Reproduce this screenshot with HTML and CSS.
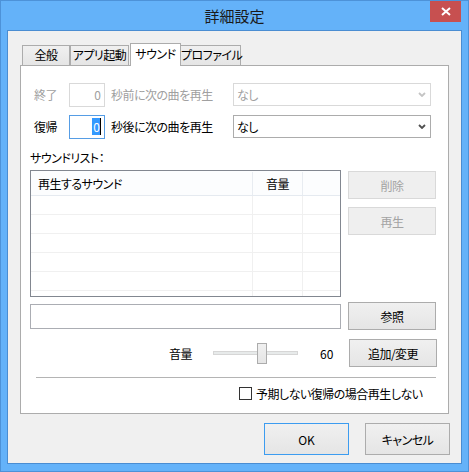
FILE: index.html
```html
<!DOCTYPE html>
<html lang="ja">
<head>
<meta charset="utf-8">
<title>詳細設定</title>
<link rel="stylesheet" href="styles.css">
</head>
<body>
<div class="window">
  <div class="titlebar">
    <div class="title">詳細設定</div>
    <button class="close" aria-label="閉じる">
      <svg width="10" height="9" viewBox="0 0 10 9"><path d="M1 1 L9 8 M9 1 L1 8" stroke="#fff" stroke-width="2" fill="none"/></svg>
    </button>
  </div>
  <div class="client">
    <div class="tabs">
      <div class="tab t1">全般</div>
      <div class="tab t2">アプリ起動</div>
      <div class="tab t3 active">サウンド</div>
      <div class="tab t4">プロファイル</div>
    </div>
    <div class="panel">
      <div class="setrow disabled">
        <span class="lbl">終了</span>
        <div class="num">0</div>
        <span class="txt">秒前に次の曲を再生</span>
        <div class="select">なし<svg class="chev" width="8" height="5" viewBox="0 0 8 5"><path d="M1 1 L4 4 L7 1" stroke="#c4c4c4" stroke-width="1.8" fill="none"/></svg></div>
      </div>
      <div class="setrow second">
        <span class="lbl">復帰</span>
        <div class="num focus"><span class="sel">0</span></div>
        <span class="txt">秒後に次の曲を再生</span>
        <div class="select">なし<svg class="chev" width="8" height="5" viewBox="0 0 8 5"><path d="M1 1 L4 4 L7 1" stroke="#505050" stroke-width="1.8" fill="none"/></svg></div>
      </div>
      <div class="listlabel">サウンドリスト：</div>
      <div class="listarea">
        <div class="list">
          <div class="lrow head"><div class="c1">再生するサウンド</div><div class="c2">音量</div><div class="c3"></div></div>
          <div class="lrow"><div class="c1"></div><div class="c2"></div><div class="c3"></div></div>
          <div class="lrow"><div class="c1"></div><div class="c2"></div><div class="c3"></div></div>
          <div class="lrow"><div class="c1"></div><div class="c2"></div><div class="c3"></div></div>
          <div class="lrow"><div class="c1"></div><div class="c2"></div><div class="c3"></div></div>
          <div class="lrow"><div class="c1"></div><div class="c2"></div><div class="c3"></div></div>
          <div class="lrow"><div class="c1"></div><div class="c2"></div><div class="c3"></div></div>
        </div>
        <div class="sidebtns">
          <button class="btn" disabled>削除</button>
          <button class="btn" disabled>再生</button>
        </div>
      </div>
      <div class="pathrow">
        <div class="path"></div>
        <button class="btn">参照</button>
      </div>
      <div class="volrow">
        <span class="vlbl">音量</span>
        <div class="slider"><div class="track"></div><div class="thumb"></div></div>
        <span class="vval">60</span>
        <button class="btn">追加/変更</button>
      </div>
      <div class="sep"></div>
      <div class="checkrow">
        <span class="box"></span>
        <span class="ctext">予期しない復帰の場合再生しない</span>
      </div>
    </div>
    <div class="footer">
      <button class="btn big default">OK</button>
      <button class="btn big">キャンセル</button>
    </div>
  </div>
</div>
</body>
</html>
```
FILE: styles.css
```css
* { box-sizing: border-box; }
html, body { margin: 0; padding: 0; }
body {
  width: 469px;
  height: 472px;
  overflow: hidden;
  font-family: "Noto Sans CJK JP", "Noto Sans", sans-serif;
  font-size: 12px;
  color: #000;
  font-feature-settings: "palt";
  letter-spacing: -0.5px;
}
.window {
  width: 469px;
  height: 472px;
  background: #64b2f9;
  border: 1px solid #4d92d8;
  display: flex;
  flex-direction: column;
  position: relative;
}
.titlebar {
  height: 29px;
  display: flex;
  align-items: center;
  justify-content: center;
  flex: none;
}
.title {
  font-size: 15px;
  line-height: 20px;
  color: #1a1a1a;
  margin-top: 1px;
  letter-spacing: 0;
}
.close {
  position: absolute;
  top: 0;
  right: 7px;
  width: 31px;
  height: 21px;
  background: #c75050;
  border: 0;
  padding: 0;
  display: flex;
  align-items: center;
  justify-content: center;
}
.client {
  margin: 0 6px;
  height: 434px;
  border: 1px solid #4a8dd2;
  background: #f0f0f0;
  padding: 12px 12px 8px 12px;
  display: flex;
  flex-direction: column;
}
.tabs {
  height: 22px;
  display: flex;
  align-items: flex-end;
  padding-left: 2px;
  flex: none;
}
.tab {
  height: 20px;
  border: 1px solid #acacac;
  border-bottom: 0;
  background: linear-gradient(#f0f0f0, #e5e5e5);
  text-align: center;
  line-height: 18px;
  white-space: nowrap;
}
.t1 { width: 48px; }
.t2 { width: 59px; }
.t3 { width: 51px; margin-left: 1px; }
.t4 { width: 61px; margin-left: -1px; }
.tab.active {
  height: 23px;
  margin-bottom: -1px;
  background: #fff;
  position: relative;
  z-index: 1;
  line-height: 19px;
}
.panel {
  height: 349px;
  border: 1px solid #acacac;
  background: #fff;
  padding: 17px 11px 0 9px;
  display: flex;
  flex-direction: column;
  flex: none;
}
.setrow {
  display: grid;
  grid-template-columns: 39px 36px 1fr 198px;
  align-items: start;
  height: 24px;
  margin-right: 6px;
}
.setrow.second { margin-top: 8px; }
.lbl { padding-left: 4px; line-height: 24px; }
.txt { padding-left: 6px; line-height: 24px; }
.num {
  height: 24px;
  border: 1px solid #abadb3;
  text-align: right;
  padding-right: 3px;
  line-height: 22px;
  background: #fff;
  letter-spacing: 0;
}
.num.focus { border-color: #569de5; }
.sel {
  background: #3399ff;
  color: #fff;
  border-right: 1px solid #000;
  padding: 0 0 0 1px;
}
.select {
  height: 23px;
  border: 1px solid #acacac;
  display: flex;
  align-items: center;
  padding: 0 4px 0 3px;
  background: #fff;
}
.chev { margin-left: auto; }
.disabled { color: #a0a0a0; }
.disabled .num, .disabled .select { border-color: #d9d9d9; }
.listlabel {
  margin-top: 11px;
  line-height: 16px;
  height: 16px;
}
.listarea {
  margin-top: 4px;
  display: flex;
  align-items: flex-start;
}
.list {
  width: 311px;
  height: 127px;
  border: 1px solid #828790;
  background: #fff;
  overflow: hidden;
  flex: none;
}
.lrow {
  display: flex;
  height: 19px;
  border-bottom: 1px solid #f0f0f0;
}
.lrow.head {
  height: 25px;
  border-bottom: 1px solid #e5eaf0;
  background: #fcfdfe;
  line-height: 24px;
  padding-top: 1px;
}
.c1 { width: 222px; border-right: 1px solid #f0f0f0; padding-left: 7px; }
.c2 { width: 50px; border-right: 1px solid #f0f0f0; text-align: center; }
.c3 { flex: 1; }
.head .c1, .head .c2 { border-right-color: #e8ecf1; }
.sidebtns {
  margin-left: 7px;
  margin-top: 1px;
  display: flex;
  flex-direction: column;
  gap: 8px;
}
.btn {
  width: 88px;
  height: 28px;
  border: 1px solid #acacac;
  background: linear-gradient(#f0f0f0, #e5e5e5);
  font: inherit;
  color: #000;
  padding: 0;
  letter-spacing: -0.5px;
  font-feature-settings: "palt";
}
.btn:disabled {
  background: #efefef;
  border-color: #d9d9d9;
  color: #a3a3a3;
}
.pathrow {
  margin-top: 5px;
  height: 28px;
  display: flex;
  align-items: center;
}
.path {
  width: 311px;
  height: 25px;
  border: 1px solid #abadb3;
  margin-right: 7px;
}
.volrow {
  margin-top: 9px;
  height: 28px;
  display: flex;
  align-items: center;
}
.vlbl { margin-left: 139px; width: 24px; }
.slider {
  position: relative;
  width: 85px;
  height: 21px;
  margin-left: 20px;
  display: flex;
  align-items: center;
}
.track {
  width: 85px;
  height: 4px;
  background: #e7eaea;
  border: 1px solid #d6d6d6;
}
.thumb {
  position: absolute;
  left: 44px;
  top: 0;
  width: 10px;
  height: 21px;
  border: 1px solid #acacac;
  background: linear-gradient(#f0f0f0, #e5e5e5);
}
.vval { margin-left: 22px; letter-spacing: 0; }
.volrow .btn { margin-left: auto; }
.sep {
  margin: 10px 1px 0 6px;
  height: 1px;
  background: #b4b4b4;
}
.checkrow {
  margin-top: 8px;
  height: 15px;
  display: flex;
  align-items: center;
  padding-left: 209px;
}
.box {
  width: 13px;
  height: 13px;
  border: 1px solid #333;
  background: #fff;
}
.ctext { margin-left: 4px; line-height: 15px; }
.footer {
  margin-top: 9px;
  margin-right: -1px;
  display: flex;
  justify-content: flex-end;
  gap: 16px;
}
.btn.big { width: 85px; height: 32px; }
.btn.default { border-color: #3c9cf0; letter-spacing: 0; }
```
